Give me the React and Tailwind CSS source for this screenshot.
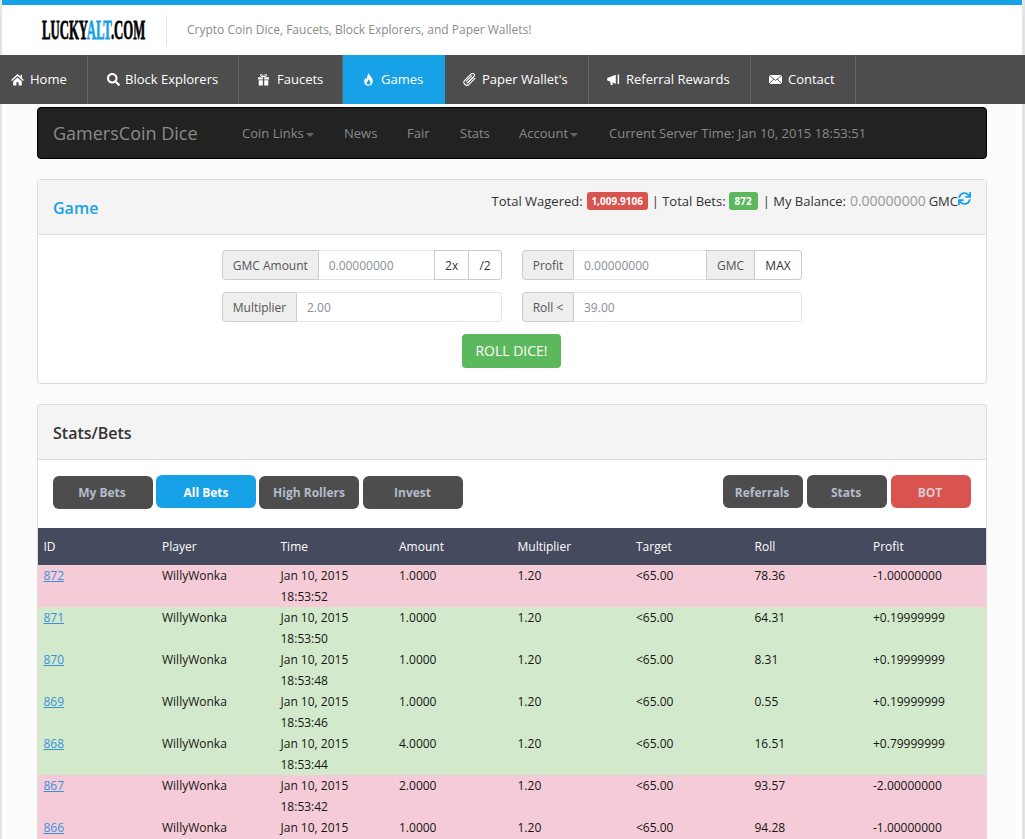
import React from "react";
import { FaSearch, FaSync } from "react-icons/fa";

const svgProps = { viewBox: "0 0 13 13", className: "size-[13px] flex-none", fill: "currentColor" };

function HomeIcon() {
  return (
    <svg {...svgProps}>
      <path d="M6.5 1 L9.5 3.8 V1.8 H11 V5.2 L13 7 L12 8 L6.5 3 L1 8 L0 7 Z" />
      <path d="M2.2 8.2 L6.5 4.4 L10.8 8.2 V12.5 H7.6 V9.2 H5.4 V12.5 H2.2 Z" />
    </svg>
  );
}
function GiftIcon() {
  return (
    <svg {...svgProps}>
      <path d="M1 4.2h4.8v2.4H1z M7.2 4.2H12v2.4H7.2z M1.7 7.3h4.1V12.5H1.7z M7.2 7.3h4.1V12.5H7.2z" />
      <path d="M6.5 4 C5 4 3 3.6 3 2.2 C3 0.8 5.6 0.6 6.5 3 C7.4 0.6 10 0.8 10 2.2 C10 3.6 8 4 6.5 4 Z M6 3.2 C5.3 2 4.2 1.7 4.1 2.3 C4 2.9 5 3.2 6 3.2 Z M7 3.2 C8 3.2 9 2.9 8.9 2.3 C8.8 1.7 7.7 2 7 3.2 Z" fillRule="evenodd" />
    </svg>
  );
}
function FireIcon() {
  return (
    <svg {...svgProps}>
      <path fillRule="evenodd" d="M6.8 0.3 C7.4 2.6 10.8 4.4 10.8 8.2 C10.8 10.8 8.8 12.7 6.4 12.7 C3.9 12.7 2.2 10.8 2.2 8.4 C2.2 6.6 3.2 5.4 4 4.4 C4.1 5.4 4.5 6 5 6.3 C4.9 4 5.6 1.8 6.8 0.3 Z M6.6 6 C6.8 7.4 8.6 8.2 8.4 9.9 C8.2 11.1 7.3 11.7 6.4 11.7 C5.4 11.7 4.6 10.9 4.6 9.9 C4.6 9.1 5 8.6 5.4 8.2 C5.5 8.7 5.8 9 6 9 C5.8 8 6 7 6.6 6 Z" />
    </svg>
  );
}
function ClipIcon() {
  return (
    <svg viewBox="0 0 13 13" className="size-[13px] flex-none" fill="none" stroke="currentColor" strokeWidth="1.1" strokeLinecap="round">
      <path d="M4.2 10.2 L10.8 3.6 A1.9 1.9 0 0 0 8.1 0.9 L1.5 7.5 A3 3 0 0 0 5.7 11.7 L12 5.4" />
      <path d="M3.2 8.2 L8.6 2.8 M5.3 9.2 L10.4 4.2" />
    </svg>
  );
}
function HornIcon() {
  return (
    <svg {...svgProps}>
      <path d="M0.2 5 L8.8 1.8 V10.8 L5.2 9.4 L5.9 11.9 H3.9 L3.1 8.6 L0.2 7.6 Z" />
      <rect x="10.6" y="1.5" width="1.5" height="9.6" />
    </svg>
  );
}
function MailIcon() {
  return (
    <svg viewBox="0 0 13 13" className="size-[13px] flex-none">
      <rect x="0" y="2" width="13" height="9" fill="currentColor" />
      <path d="M0 2.2 L6.5 7.4 L13 2.2 M0 11 L4.8 6 M13 11 L8.2 6" fill="none" stroke="#4d4d4d" strokeWidth="0.9" />
    </svg>
  );
}
function SearchIcon() {
  return <FaSearch className="size-[13px] flex-none" />;
}

const nav = [
  { t: "Home", I: HomeIcon, w: "w-[88px] pl-[11px] gap-[6px]" },
  { t: "Block Explorers", I: SearchIcon, w: "w-[151px] pl-[19px] gap-[5px]" },
  { t: "Faucets", I: GiftIcon, w: "w-[104px] pl-[18px] gap-[7px]" },
  { t: "Games", I: FireIcon, w: "w-[102px] pl-[19px] gap-[6px]", active: true },
  { t: "Paper Wallet's", I: ClipIcon, w: "w-[144px] pl-[18px] gap-[6px]" },
  { t: "Referral Rewards", I: HornIcon, w: "w-[162px] pl-[18px] gap-[6px]" },
  { t: "Contact", I: MailIcon, w: "w-[105px] pl-[18px] gap-[6px]" },
];

const rows = [
  ["872", "1.0000", "78.36", "-1.00000000", "52", 0],
  ["871", "1.0000", "64.31", "+0.19999999", "50", 1],
  ["870", "1.0000", "8.31", "+0.19999999", "48", 1],
  ["869", "1.0000", "0.55", "+0.19999999", "46", 1],
  ["868", "4.0000", "16.51", "+0.79999999", "44", 1],
  ["867", "2.0000", "93.57", "-2.00000000", "42", 0],
  ["866", "1.0000", "94.28", "-1.00000000", "40", 0],
];

function Addon({ children, className = "" }) {
  return <span className={"flex h-[30px] items-center justify-center border border-[#cccccc] bg-[#eeeeee] pt-[1px] text-[#555555] " + className}>{children}</span>;
}
function Btn({ children, className = "" }) {
  return <span className={"flex h-[30px] items-center justify-center border border-[#cccccc] bg-white pt-[1px] text-[#333333] " + className}>{children}</span>;
}
function Field({ children, className = "" }) {
  return <span className={"flex h-[30px] items-center border-y border-[#e4e4e4] bg-white px-[10px] pt-[1px] text-[#8a8f98] " + className}>{children}</span>;
}
function Tab({ children, className = "" }) {
  return <span className={"flex h-[33px] items-center justify-center rounded-[6px] text-[12px] font-bold " + className}>{children}</span>;
}

export default function App() {
  return (
    <div className="h-[839px] w-[1025px] overflow-hidden bg-[#e4e4e4] font-['Open_Sans',sans-serif] text-[13px] text-[#333333]">
      <div className="ml-[2px] mr-[3px] h-[5px] bg-[#17a1e6]" />
      <header className="ml-[2px] mr-[3px] flex h-[50px] items-center bg-white pl-[40px]">
        <span className="w-[124px] flex-none">
          <span className="inline-block origin-left scale-x-[0.455] whitespace-nowrap font-['Liberation_Serif',serif] text-[28px] font-bold leading-none text-black [-webkit-text-stroke:0.8px_currentColor]">
            LUCKY<span className="text-[#17a1e6]">ALT</span>.COM
          </span>
        </span>
        <span className="h-[31px] w-px bg-[#e6e6e6]" />
        <span className="ml-[20px] text-[12px] text-[#8b8b8b]">Crypto Coin Dice, Faucets, Block Explorers, and Paper Wallets!</span>
      </header>
      <nav className="flex h-[49px] bg-[#4d4d4d]">
        {nav.map(({ t, I, w, active }) => (
          <a key={t} className={"flex h-full items-center text-[13px] text-white " + w + " " + (active ? "bg-[#17a1e6]" : "border-r border-[#666666]")}>
            <I />
            {t}
          </a>
        ))}
      </nav>
      <div className="ml-[2px] mr-[3px] h-[735px] bg-white pl-[5px] pr-[6px] pt-[1px]">
        <main className="h-full bg-[#fbfbfb] pl-[30px] pr-[29px] pt-[2px]">
          <div className="flex h-[52px] items-center rounded-[4px] border border-black bg-[#222222] pl-[15px] pt-[1px] text-[13px] text-[#8a8a8a]">
            <span className="w-[189px] text-[18px] text-[#8a8a8a]">GamersCoin Dice</span>
            <span className="flex w-[102px] items-center">
              Coin Links<span className="ml-[2px] mt-[2px] border-x-[4px] border-t-[4px] border-x-transparent border-t-[#666666]" />
            </span>
            <span className="w-[63px]">News</span>
            <span className="w-[53px]">Fair</span>
            <span className="w-[59px]">Stats</span>
            <span className="flex w-[90px] items-center">
              Account<span className="ml-[2px] mt-[2px] border-x-[4px] border-t-[4px] border-x-transparent border-t-[#666666]" />
            </span>
            <span>Current Server Time: Jan 10, 2015 18:53:51</span>
          </div>

          <section className="mt-[20px] h-[205px] rounded-[4px] border border-[#dddddd] bg-white">
            <div className="flex h-[55px] items-start justify-between border-b border-[#dddddd] bg-[#f4f4f4] px-[15px]">
              <h2 className="mt-[18px] text-[16px] font-semibold leading-[20px] text-[#17a1e6]">Game</h2>
              <div className="mt-[12px] flex items-center text-[13px] leading-[18px]">
                Total Wagered:
                <span className="ml-[4px] mr-[4px] flex h-[18px] w-[61px] items-center justify-center rounded-[3px] bg-[#d9534f] text-[10px] font-bold text-white">1,009.9106</span>
                | Total Bets:
                <span className="ml-[3px] mr-[5px] flex h-[18px] items-center rounded-[3px] bg-[#5cb85c] px-[6px] text-[10px] font-bold text-white">872</span>
                | My Balance:<span className="ml-[4px] mr-[3px] text-[14px] text-[#999999]">0.00000000</span>GMC
                <FaSync className="mb-[5px] size-[13px] text-[#17a1e6]" />
              </div>
            </div>
            <div className="flex flex-col items-center pt-[15px] text-[12px]">
              <div className="flex gap-[20px]">
                <div className="flex w-[280px] flex-col gap-[12px]">
                  <div className="flex">
                    <Addon className="w-[97px] rounded-l-[4px]">GMC Amount</Addon>
                    <Field className="w-[116px]">0.00000000</Field>
                    <Btn className="w-[35px]">2x</Btn>
                    <Btn className="w-[33px] rounded-r-[4px] border-l-0">/2</Btn>
                  </div>
                  <div className="flex">
                    <Addon className="w-[75px] rounded-l-[4px]">Multiplier</Addon>
                    <Field className="flex-1 rounded-r-[4px] border-r">2.00</Field>
                  </div>
                </div>
                <div className="flex w-[280px] flex-col gap-[12px]">
                  <div className="flex">
                    <Addon className="w-[52px] rounded-l-[4px]">Profit</Addon>
                    <Field className="w-[132px]">0.00000000</Field>
                    <Addon className="w-[49px]">GMC</Addon>
                    <Btn className="w-[47px] rounded-r-[4px] border-l-0">MAX</Btn>
                  </div>
                  <div className="flex">
                    <Addon className="w-[52px] rounded-l-[4px]">Roll &lt;</Addon>
                    <Field className="flex-1 rounded-r-[4px] border-r">39.00</Field>
                  </div>
                </div>
              </div>
              <span className="mr-[1px] mt-[12px] flex h-[34px] w-[99px] items-center justify-center rounded-[4px] bg-[#5cb85c] pb-[1px] text-[14px] text-white">ROLL DICE!</span>
            </div>
          </section>

          <section className="mt-[20px] overflow-hidden rounded-t-[4px] border-x border-t border-[#dddddd] bg-white">
            <div className="flex h-[55px] items-center border-b border-[#dddddd] bg-[#f4f4f4] pl-[15px] pt-[2px]">
              <h2 className="text-[16px] font-semibold text-[#333333]">Stats/Bets</h2>
            </div>
            <div className="flex h-[68px] justify-between px-[15px] pt-[15px]">
              <div className="flex">
                <Tab className="mt-[1px] w-[100px] bg-[#4d4d4d] pr-[2px] pt-[1px] text-[#b4bccb]">My Bets</Tab>
                <Tab className="ml-[3px] w-[100px] bg-[#17a1e6] pt-[3px] text-white">All Bets</Tab>
                <Tab className="ml-[3px] mt-[1px] w-[100px] bg-[#4d4d4d] pt-[1px] text-[#b4bccb]">High Rollers</Tab>
                <Tab className="ml-[4px] mt-[1px] w-[100px] bg-[#4d4d4d] pr-[1px] pt-[1px] text-[#b4bccb]">Invest</Tab>
              </div>
              <div className="flex gap-[4px]">
                <Tab className="w-[80px] bg-[#4d4d4d] pr-[2px] pt-[2px] text-[#b4bccb]">Referrals</Tab>
                <Tab className="w-[80px] bg-[#4d4d4d] pr-[2px] pt-[2px] text-[#b4bccb]">Stats</Tab>
                <Tab className="w-[80px] bg-[#d9534f] pr-[2px] pt-[2px] text-[#d8c8d4]">BOT</Tab>
              </div>
            </div>
            <table className="w-[948px] table-fixed border-collapse text-left text-[12px] leading-[21px]">
              <thead className="bg-[#454a5e] text-white">
                <tr className="h-[37px]">
                  {["ID", "Player", "Time", "Amount", "Multiplier", "Target", "Roll", "Profit"].map((h) => (
                    <th key={h} className="pl-[5.5px] pr-[6px] font-normal">{h}</th>
                  ))}
                </tr>
              </thead>
              <tbody className="text-[#151515]">
                {rows.map(([id, amt, roll, profit, sec, win]) => (
                  <tr key={id} className={"h-[42px] align-top " + (win ? "bg-[#d3e9cb]" : "bg-[#f4cbd6]")}>
                    <td className="pl-[5.5px] pr-[6px]"><a className="text-[#3a92dc] underline">{id}</a></td>
                    <td className="pl-[5.5px] pr-[6px]">WillyWonka</td>
                    <td className="pl-[5.5px] pr-[6px]">Jan 10, 2015<br />18:53:{sec}</td>
                    <td className="pl-[5.5px] pr-[6px]">{amt}</td>
                    <td className="pl-[5.5px] pr-[6px]">1.20</td>
                    <td className="pl-[5.5px] pr-[6px]">&lt;65.00</td>
                    <td className="pl-[5.5px] pr-[6px]">{roll}</td>
                    <td className="pl-[5.5px] pr-[6px]">{profit}</td>
                  </tr>
                ))}
              </tbody>
            </table>
          </section>
        </main>
      </div>
    </div>
  );
}
